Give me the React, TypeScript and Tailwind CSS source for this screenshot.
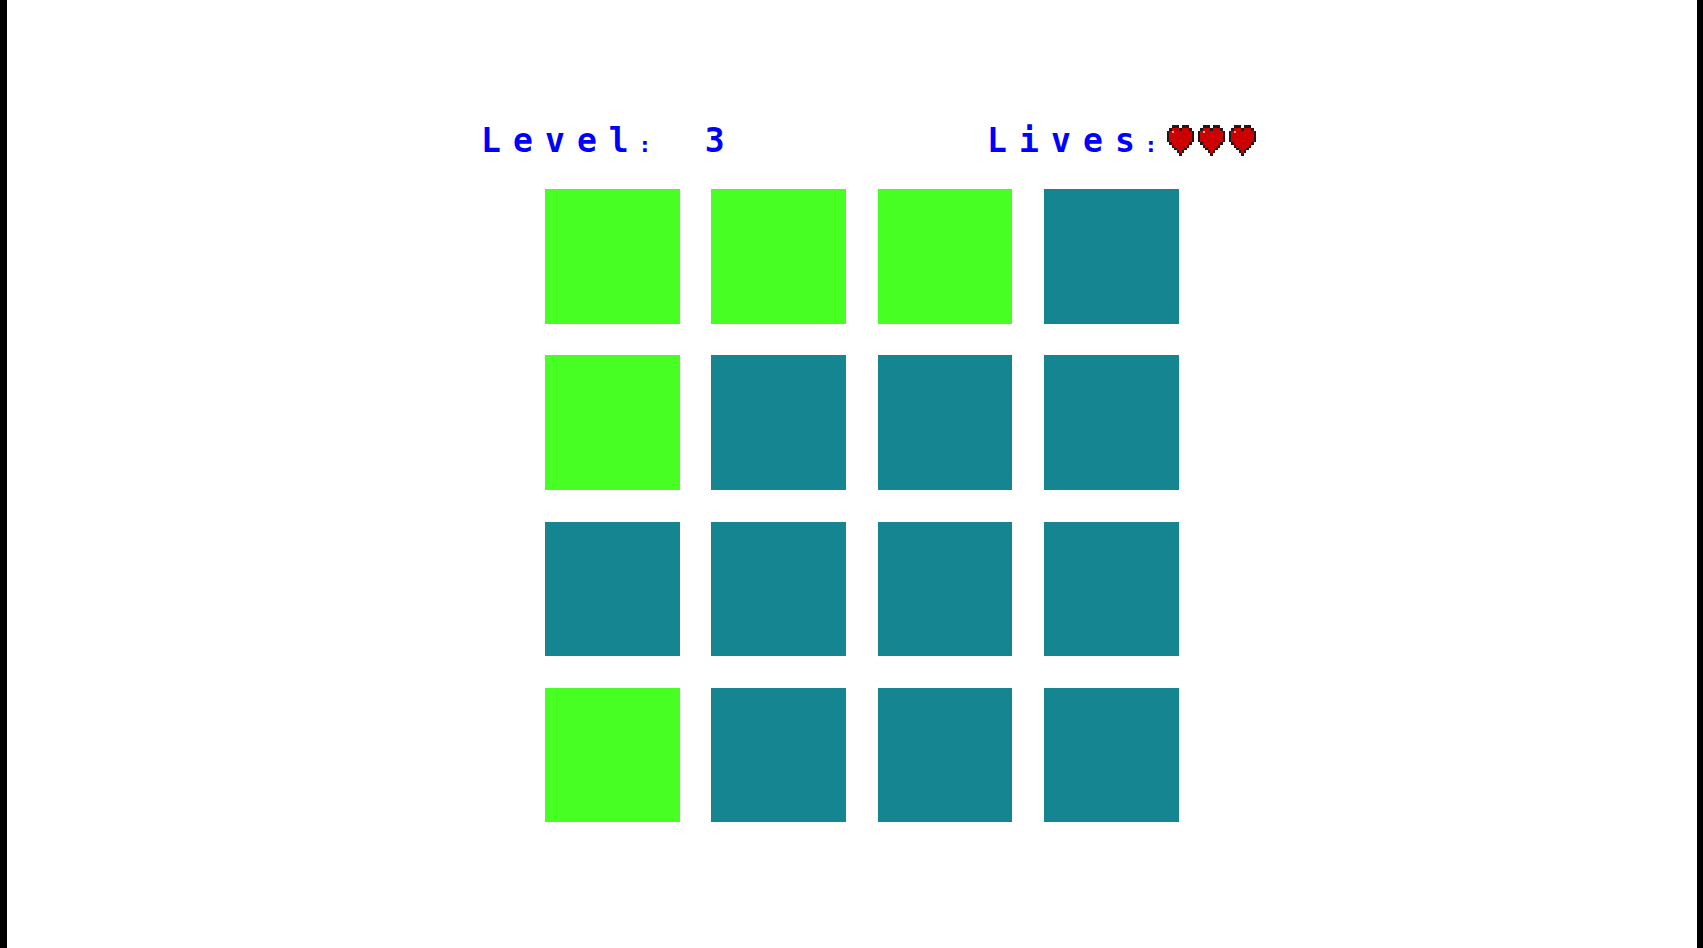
const lit = [
  [true, true, true, false],
  [true, false, false, false],
  [false, false, false, false],
  [true, false, false, false],
]

// rows of the little pixel heart: . empty, k outline, r red, w highlight
const heartRows = [
  '..kkk.kkk..',
  '.krrrkrrrk.',
  'krwrrrrrrrk',
  'krrrrrrrrrk',
  'krrrrrrrrrk',
  'krrrrrrrrrk',
  '.krrrrrrrk.',
  '..krrrrrk..',
  '...krrrk...',
  '....krk....',
  '.....k.....',
]

const heartColors: Record<string, string> = { k: '#1a1a1a', r: '#cc0000', w: '#ff9a9a' }

const Heart = () => (
  <svg
    width="27"
    height="31"
    viewBox="0 0 11 11"
    preserveAspectRatio="none"
    shapeRendering="crispEdges"
    className="shrink-0 blur-[0.7px]"
  >
    {heartRows.map((row, y) =>
      row.split('').map((c, x) =>
        c === '.' ? null : <rect key={`${x}-${y}`} x={x} y={y} width="1" height="1" fill={heartColors[c]} />
      )
    )}
  </svg>
)

const Colon = () => <span className="ml-[-2.6px] mr-[9.3px] text-[22px]">:</span>

export default function App() {
  return (
    <div className="h-[948px] overflow-hidden border-l-[7px] border-r-[6px] border-black bg-white pt-[125px] font-['DejaVu_Sans_Mono',monospace]">
      {/* Header */}
      <div className="ml-[474px] flex h-[31px] w-[775px] items-center justify-between text-[33px] font-bold leading-none tracking-[12.1px] text-[#0000ff]">
        <span className="whitespace-pre">
          Level
          <Colon /> 3
        </span>
        <div className="flex items-center gap-[4px]">
          <span className="mr-[-16px] whitespace-pre">
            Lives
            <Colon />
          </span>
          <Heart />
          <Heart />
          <Heart />
        </div>
      </div>

      {/* Board */}
      <div className="ml-[538px] mt-[33px] grid w-[633.5px] grid-cols-4 gap-x-[31.7px] gap-y-[31.75px]">
        {lit.flat().map((on, i) => (
          <div key={i} className={`h-[134.55px] ${on ? 'bg-[#47ff22]' : 'bg-[#168592]'}`} />
        ))}
      </div>
    </div>
  )
}
